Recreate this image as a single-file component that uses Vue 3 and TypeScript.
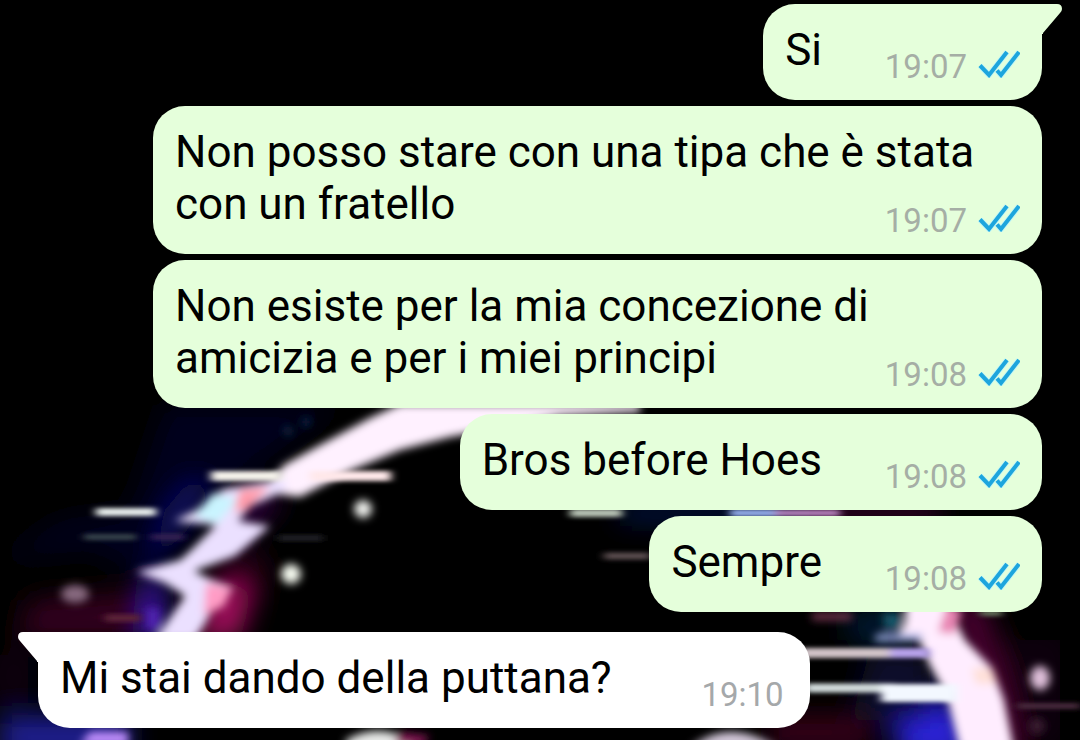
<script setup lang="ts">
interface Message {
  id: number
  text: string
  time: string
  outgoing: boolean
  tail: boolean
}

const messages: Message[] = [
  { id: 1, text: 'Si', time: '19:07', outgoing: true, tail: true },
  { id: 2, text: 'Non posso stare con una tipa che è stata con un fratello', time: '19:07', outgoing: true, tail: false },
  { id: 3, text: 'Non esiste per la mia concezione di amicizia e per i miei principi', time: '19:08', outgoing: true, tail: false },
  { id: 4, text: 'Bros before Hoes', time: '19:08', outgoing: true, tail: false },
  { id: 5, text: 'Sempre', time: '19:08', outgoing: true, tail: false },
  { id: 6, text: 'Mi stai dando della puttana?', time: '19:10', outgoing: false, tail: true },
]
</script>

<template>
  <main class="chat">
    <svg class="wallpaper" viewBox="0 0 1080 740" preserveAspectRatio="xMidYMax slice" aria-hidden="true">
      <defs>
        <filter id="soft" x="-20%" y="-20%" width="140%" height="140%"><feGaussianBlur stdDeviation="4" /></filter>
        <filter id="line" x="-20%" y="-200%" width="140%" height="500%"><feGaussianBlur stdDeviation="4 2" /></filter>
        <filter id="glow" x="-50%" y="-50%" width="200%" height="200%"><feGaussianBlur stdDeviation="13" /></filter>
      </defs>
      <rect width="1080" height="740" fill="#000" />

      <g filter="url(#glow)">
        <path d="M165 405H340L260 465 190 500 150 580 90 550 0 560 60 520 130 510Z" fill="#03031a" />
        <path d="M190 480L215 490 180 540 150 570 165 510Z" fill="#0c0c5c" />
        <path d="M250 480L285 500 240 545 215 560Z" fill="#2a0538" />
        <path d="M218 575L255 585 240 640H195Z" fill="#a0085c" />
        <path d="M240 550L270 560 260 600 230 580Z" fill="#2a0216" />
        <path d="M30 600L150 590 160 640H20Z" fill="#30041a" />
        <path d="M145 580H165V640H140Z" fill="#3412a0" />
        <path d="M0 715H130V760H0Z" fill="#1c1c8c" />
        <path d="M0 490H12V650H0Z" fill="#000d02" />
        <path d="M0 655H28V700H0Z" fill="#080418" />
        <path d="M845 613H900V640H850Z" fill="#061a38" />
        <path d="M890 700H955L975 760H900Z" fill="#2a20d8" />
        <path d="M945 600H985L1010 690 1040 720 1020 760H1000Z" fill="#46062e" />
        <path d="M770 715H870V750H770Z" fill="#360515" />
        <path d="M870 650H930V720H850Z" fill="#08082a" />
        <path d="M1000 640H1060V740H1020Z" fill="#0c0609" />
        <path d="M620 508H800V520H620Z" fill="#101c66" />
        <path d="M800 508H940V520H800Z" fill="#570a45" />
      </g>

      <g filter="url(#soft)">
        <path d="M262 492L300 497 352 470 400 450 450 437 500 428 560 416 640 412 640 404 400 404 370 418 320 445 284 465Z" fill="#fff1ff" />
        <path d="M283 478L255 484 223 489 197 510 174 521 216 525 190 551 180 560 136 572 165 583 185 596 174 612 155 640H195L215 606 234 588 212 580 194 571 235 556 270 526 238 521 251 506 287 490Z" fill="#ebe0ff" />
        <path d="M213 493L238 499 217 524 194 516Z" fill="#c9f4ff" />
        <path d="M240 489L270 487 247 510 234 512Z" fill="#ff9baa" />
        <path d="M206 583L232 588 224 606 204 616Z" fill="#ff9bc5" />
        <path d="M146 608H160V630H146Z" fill="#5021ae" />
        <path d="M906 600H946L965 640 992 668 1004 700 1014 750H960L947 697 930 666 920 642 897 637 905 624Z" fill="#ffedff" />
        <path d="M947 605L962 610 955 634 938 632Z" fill="#e884b2" />
        <path d="M877 634H922V641H874Z" fill="#9ba9e0" />
        <path d="M972 668L992 668 998 684H976Z" fill="#ffe0d8" />
        <path d="M812 613H852V620H812Z" fill="#7d3752" />
        <path d="M882 613H902V630H885Z" fill="#135568" />
        <path d="M90 732H128V745H80Z" fill="#c492ff" />
        <path d="M346 740Q378 722 410 740V750H346Z" fill="#e8eae8" />
        <path d="M398 732L430 736 422 746H395Z" fill="#841455" />
        <path d="M690 748Q729 716 778 748Z" fill="#d6cbdd" />
        <circle cx="363" cy="509" r="9" fill="#f0f2ee" />
        <circle cx="291" cy="574" r="10" fill="#f6faf0" />
        <ellipse cx="75" cy="594" rx="14" ry="9" fill="#886b80" />
        <ellipse cx="1040" cy="678" rx="10" ry="12" fill="#dfc0da" />
        <circle cx="1037" cy="726" r="8" fill="#3b1b33" />
        <circle cx="288" cy="431" r="4" fill="#143653" />
        <circle cx="306" cy="422" r="5" fill="#082447" />
      </g>

      <g filter="url(#line)" fill="none">
        <path d="M211 476H282" stroke="#f4f2ea" stroke-width="10" />
        <path d="M310 476H391" stroke="#ffe8ea" stroke-width="10" />
        <path d="M96 512H156" stroke="#e8eeec" stroke-width="8" />
        <path d="M84 537H136" stroke="#37444c" stroke-width="6" />
        <path d="M151 537H184" stroke="#352353" stroke-width="6" />
        <path d="M278 538H323" stroke="#242426" stroke-width="6" />
        <path d="M105 618H140" stroke="#5a2238" stroke-width="8" />
        <path d="M570 513H622" stroke="#b9c5b6" stroke-width="8" />
        <path d="M604 556H650" stroke="#5b4d50" stroke-width="7" />
        <path d="M730 513H780" stroke="#9ab4f3" stroke-width="7" />
        <path d="M775 513H840" stroke="#c08ac8" stroke-width="6" />
        <path d="M800 653H895" stroke="#d0c3c7" stroke-width="10" />
        <path d="M890 653H930" stroke="#b5a0e9" stroke-width="10" />
        <path d="M805 688H895" stroke="#d2dbdb" stroke-width="9" />
        <path d="M881 693H958" stroke="#f3f8ff" stroke-width="18" />
        <path d="M1017 706H1080" stroke="#4a2a3c" stroke-width="6" />
        <path d="M980 613H1002" stroke="#66765d" stroke-width="6" />
      </g>
    </svg>

    <ol class="messages">
      <li
        v-for="message in messages"
        :key="message.id"
        class="bubble"
        :class="message.outgoing ? 'outgoing' : 'incoming'"
      >
        <svg v-if="message.tail" class="tail" viewBox="0 0 20 30" aria-hidden="true">
          <path d="M0 0H15Q20 0 20 5Q20 7 18 9L1 29V30H0Z" />
        </svg>
        <p class="text">{{ message.text }}<span class="spacer"></span></p>
        <div class="meta">
          <time>{{ message.time }}</time>
          <svg v-if="message.outgoing" class="ticks" viewBox="0 0 42 28" role="img" aria-label="Letto">
            <g class="halo">
              <path d="M2 15.5L11 25L29 2" />
              <path d="M19 20.5L23 25L41 2" />
            </g>
            <path d="M2 15.5L11 25L29 2" />
            <path d="M19 20.5L23 25L41 2" />
          </svg>
        </div>
      </li>
    </ol>
  </main>
</template>

<style>
body {
  margin: 0;
  background: #000;
}
</style>

<style scoped>
.chat {
  position: relative;
  box-sizing: border-box;
  min-height: 100vh;
  padding: 4px 38px 12px;
  overflow: hidden;
  font-family: Roboto, "Noto Sans", sans-serif;
}

.wallpaper {
  position: absolute;
  inset: 0;
  width: 100%;
  height: 100%;
}

.messages {
  position: relative;
  display: flex;
  flex-direction: column;
  gap: 6px;
  margin: 0;
  padding: 0;
  list-style: none;
}

.bubble {
  position: relative;
  display: grid;
  border-radius: 32px;
  padding: 20px 22px 24px;
}

.bubble > .text,
.bubble > .meta {
  grid-area: 1 / 1;
}

.outgoing {
  align-self: flex-end;
  margin-left: 115px;
  background: #e5ffdb;
}

.incoming {
  align-self: flex-start;
  margin-top: 14px;
  padding-right: 26px;
  border-top-left-radius: 0;
  background: #fff;
}

.outgoing:first-child {
  border-top-right-radius: 0;
}

.text {
  margin: 0;
  color: #000;
  font-size: 44px;
  line-height: 52px;
}

.spacer {
  display: inline-block;
  width: 198px;
  height: 1px;
}

.incoming .spacer {
  width: 172px;
}

.meta {
  display: flex;
  align-self: end;
  justify-self: end;
  align-items: center;
  gap: 11px;
  margin-bottom: -11px;
  color: #a5aea5;
  font-size: 33px;
  line-height: 40px;
}

.incoming .meta {
  color: #a5a8aa;
}

.ticks {
  width: 42px;
  height: 28px;
  margin-bottom: 6px;
  fill: none;
  stroke: #1da5dd;
  stroke-width: 4;
}

.halo {
  stroke: #c5f7f3;
  stroke-width: 6;
}

.tail {
  position: absolute;
  top: 0;
  left: 100%;
  width: 20px;
  height: 30px;
  fill: #e5ffdb;
}

.incoming .tail {
  right: 100%;
  left: auto;
  fill: #fff;
  transform: scaleX(-1);
}
</style>
